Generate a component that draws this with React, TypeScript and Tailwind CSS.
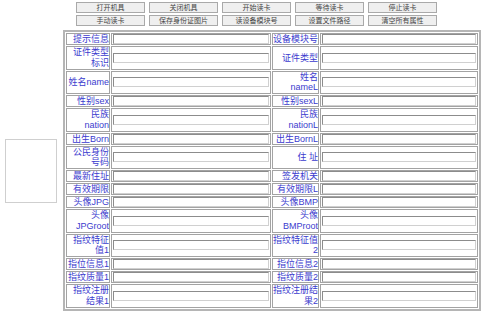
import React from "react";

const buttons = [
  "打开机具",
  "关闭机具",
  "开始读卡",
  "等待读卡",
  "停止读卡",
  "手动读卡",
  "保存身份证图片",
  "读设备模块号",
  "设置文件路径",
  "清空所有属性",
];

// each label is split into the lines the form shows
const rows: [string[], string[]][] = [
  [["提示信息"], ["设备模块号"]],
  [["证件类型", "标识"], ["证件类型"]],
  [["姓名name"], ["姓名", "nameL"]],
  [["性别sex"], ["性别sexL"]],
  [["民族", "nation"], ["民族", "nationL"]],
  [["出生Born"], ["出生BornL"]],
  [["公民身份", "号码"], ["住 址"]],
  [["最新住址"], ["签发机关"]],
  [["有效期限"], ["有效期限L"]],
  [["头像JPG"], ["头像BMP"]],
  [["头像", "JPGroot"], ["头像", "BMProot"]],
  [["指纹特征", "值1"], ["指纹特征值", "2"]],
  [["指位信息1"], ["指位信息2"]],
  [["指纹质量1"], ["指纹质量2"]],
  [["指纹注册", "结果1"], ["指纹注册结", "果2"]],
];

const Label = ({ lines }: { lines: string[] }) => (
  <td
    className={
      "border border-[#a3a3a3] p-0 text-right align-middle text-[9px] text-[#3b3bce] whitespace-pre overflow-hidden " +
      (lines.length > 1 ? "leading-[10.75px]" : "leading-[10px]")
    }
  >
    {lines.map((t) => (
      <div key={t}>{t}</div>
    ))}
  </td>
);

const Field = () => (
  <td className="border border-[#a3a3a3] px-[1px] py-0 align-middle">
    <input
      type="text"
      className="block w-full h-[10px] border border-t-[#8c8c8c] border-l-[#8c8c8c] border-b-[#d0d0d0] border-r-[#d0d0d0] bg-white outline-none"
    />
  </td>
);

const App = () => {
  return (
    <div
      className="flex w-[500px] h-[316px] bg-white overflow-hidden"
      style={{ fontFamily: '"Liberation Sans", "Noto Sans CJK SC", sans-serif' }}
    >
      <div className="w-[63px] shrink-0 pt-[139px] pl-[5px]">
        <div className="w-[52px] h-[64px] border border-[#cfcfcf]" />
      </div>
      <div className="w-[418px] shrink-0 pt-[2px]">
        <div className="ml-[13px] w-[361px] grid grid-cols-5 gap-x-[4px] gap-y-[2px]">
          {buttons.map((b) => (
            <button
              key={b}
              className="h-[11px] border border-[#a9a9a9] bg-[#efefef] text-[7px] leading-[9px] text-[#444] text-center"
            >
              {b}
            </button>
          ))}
        </div>
        <table className="mt-[4px] w-[418px] table-fixed border-separate border-spacing-[1px] border-2 border-[#b5b5b5]">
          <colgroup>
            <col className="w-[44px]" />
            <col className="w-[160px]" />
            <col className="w-[47px]" />
            <col className="w-[158px]" />
          </colgroup>
          <tbody>
            {rows.map(([l, r]) => (
              <tr key={l.join("")}>
                <Label lines={l} />
                <Field />
                <Label lines={r} />
                <Field />
              </tr>
            ))}
          </tbody>
        </table>
      </div>
    </div>
  );
};

export default App;
